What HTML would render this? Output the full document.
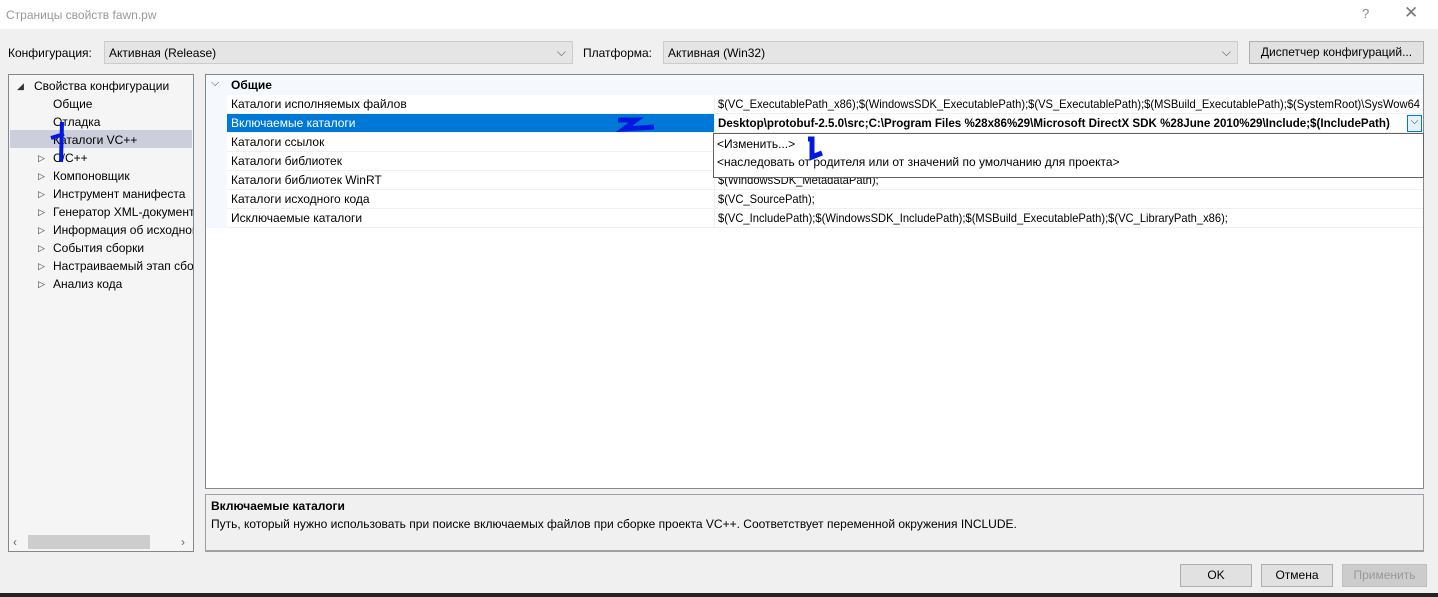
<!DOCTYPE html>
<html><head><meta charset="utf-8"><style>
*{margin:0;padding:0;box-sizing:border-box}
body{width:1438px;height:597px;background:#f0f0f0;font-family:"Liberation Sans",sans-serif;font-size:12px;color:#000;position:relative;overflow:hidden}
.a{position:absolute;white-space:nowrap}
.cn{display:inline-block;transform:scaleX(.93);transform-origin:left center}
.row{position:absolute;left:227px;width:1196px;height:19px;border-bottom:1px solid #f0f0f0;overflow:hidden}
.row .n{position:absolute;left:4px;top:2px}
.row .v{position:absolute;left:487px;border-left:1px solid #f0f0f0;padding-left:3px;height:19px;top:0;line-height:18px}
.tree div{position:absolute;white-space:nowrap}
.tri{font-size:9px;color:#333}
.btn{position:absolute;top:564px;height:23px;border:1px solid #adadad;background:#e1e1e1;text-align:center;line-height:21px}
</style></head><body>
<div class="a" style="left:0;top:0;width:1438px;height:29px;background:#fff"></div>
<div class="a" style="left:6px;top:8px;color:#999;font-size:12px">Страницы свойств fawn.pw</div>
<div class="a" style="left:1362px;top:6px;color:#888;font-size:13px">?</div>
<div class="a" style="left:1404px;top:3px;color:#777;font-size:17px">✕</div>

<div class="a" style="left:8px;top:46px">Конфигурация:</div>
<div class="a" style="left:104px;top:41px;width:469px;height:23px;background:#e5e5e5;border:1px solid #ccc;padding:4px 4px"><span>Активная (Release)</span><span style="position:absolute;right:6px;top:3px;color:#555">⌵</span></div>
<div class="a" style="left:583px;top:46px">Платформа:</div>
<div class="a" style="left:663px;top:41px;width:575px;height:23px;background:#e5e5e5;border:1px solid #ccc;padding:4px 4px"><span>Активная (Win32)</span><span style="position:absolute;right:6px;top:3px;color:#555">⌵</span></div>
<div class="a" style="left:1249px;top:41px;width:175px;height:23px;background:#e1e1e1;border:1px solid #adadad;text-align:center;line-height:21px">Диспетчер конфигураций...</div>

<!-- tree -->
<div class="a tree" style="left:8px;top:74px;width:186px;height:478px;background:#f5f5f5;border:1px solid #828790">
<div style="left:1px;top:55px;width:182px;height:18px;background:#cccedb"></div>
<div class="tri" style="left:8px;top:6px">◢</div><div style="left:25px;top:4px">Свойства конфигурации</div>
<div style="left:44px;top:22px">Общие</div>
<div style="left:44px;top:40px">Отладка</div>
<div style="left:44px;top:58px">Каталоги VC++</div>
<div class="tri" style="left:29px;top:78px">▷</div><div style="left:44px;top:76px">C/C++</div>
<div class="tri" style="left:29px;top:96px">▷</div><div style="left:44px;top:94px">Компоновщик</div>
<div class="tri" style="left:29px;top:114px">▷</div><div style="left:44px;top:112px">Инструмент манифеста</div>
<div class="tri" style="left:29px;top:132px">▷</div><div style="left:44px;top:130px;width:140px;overflow:hidden">Генератор XML-документов</div>
<div class="tri" style="left:29px;top:150px">▷</div><div style="left:44px;top:148px;width:140px;overflow:hidden">Информация об исходном</div>
<div class="tri" style="left:29px;top:168px">▷</div><div style="left:44px;top:166px">События сборки</div>
<div class="tri" style="left:29px;top:186px">▷</div><div style="left:44px;top:184px;width:140px;overflow:hidden">Настраиваемый этап сборки</div>
<div class="tri" style="left:29px;top:204px">▷</div><div style="left:44px;top:202px">Анализ кода</div>
<div style="left:19px;top:460px;width:122px;height:14px;background:#cdcdcd"></div>
<div style="left:4px;top:460px;color:#666">‹</div><div style="left:172px;top:460px;color:#666">›</div>
</div>
<svg class="a" style="left:48px;top:118px" width="22" height="46"><path d="M14 4 L13 44 M3 20 L16 16" stroke="#0018e0" stroke-width="4" fill="none"/></svg>

<!-- grid -->
<div class="a" style="left:205px;top:74px;width:1219px;height:415px;background:#fff;border:1px solid #828790"></div>
<div class="a" style="left:206px;top:75px;width:1217px;height:20px;background:#f5f8fc"></div>
<div class="a" style="left:206px;top:95px;width:21px;height:133px;background:#f5f8fc"></div>
<div class="a" style="left:211px;top:77px;font-size:11px;color:#444">⌵</div>
<div class="a" style="left:231px;top:78px;font-weight:bold">Общие</div>
<div class="row" style="top:95px"><span class="n">Каталоги исполняемых файлов</span><span class="v"><span class="cn">$(VC_ExecutablePath_x86);$(WindowsSDK_ExecutablePath);$(VS_ExecutablePath);$(MSBuild_ExecutablePath);$(SystemRoot)\SysWow64</span></span></div>
<div class="row" style="top:114px;background:#0078d7;color:#fff"><span class="n">Включаемые каталоги</span><span class="v" style="background:#fff;color:#000;width:709px;font-weight:bold"><span class="cn" style="transform:scaleX(.965)">Desktop\protobuf-2.5.0\src;C:\Program Files %28x86%29\Microsoft DirectX SDK %28June 2010%29\Include;$(IncludePath)</span></span><span style="position:absolute;right:1px;top:1px;width:15px;height:17px;border:1px solid #0078d7;background:#e5f1fb;color:#333;font-size:10px;text-align:center">⌵</span></div>
<div class="row" style="top:133px"><span class="n">Каталоги ссылок</span></div>
<div class="row" style="top:152px"><span class="n">Каталоги библиотек</span></div>
<div class="row" style="top:171px"><span class="n">Каталоги библиотек WinRT</span><span class="v"><span class="cn">$(WindowsSDK_MetadataPath);</span></span></div>
<div class="row" style="top:190px"><span class="n">Каталоги исходного кода</span><span class="v"><span class="cn">$(VC_SourcePath);</span></span></div>
<div class="row" style="top:209px"><span class="n">Исключаемые каталоги</span><span class="v"><span class="cn">$(VC_IncludePath);$(WindowsSDK_IncludePath);$(MSBuild_ExecutablePath);$(VC_LibraryPath_x86);</span></span></div>
<!-- dropdown -->
<div class="a" style="left:713px;top:133px;width:711px;height:45px;background:#fff;border:1px solid #646464">
<div class="a" style="left:3px;top:3px">&lt;Изменить...&gt;</div>
<div class="a" style="left:3px;top:21px">&lt;наследовать от родителя или от значений по умолчанию для проекта&gt;</div>
</div>
<svg class="a" style="left:614px;top:112px" width="46" height="22"><path d="M4 8 L22 8 L10 17 L40 15" stroke="#0018e0" stroke-width="5" fill="none"/></svg>
<svg class="a" style="left:800px;top:135px" width="30" height="28"><path d="M8 4 L12 4 L12 22 L22 18" stroke="#0018e0" stroke-width="5" fill="none"/></svg>

<!-- description -->
<div class="a" style="left:205px;top:494px;width:1219px;height:58px;border:1px solid #a0a0a0;border-bottom:2px solid #a0a0a0;background:#f0f0f0"></div>
<div class="a" style="left:211px;top:499px;font-weight:bold">Включаемые каталоги</div>
<div class="a" style="left:211px;top:517px">Путь, который нужно использовать при поиске включаемых файлов при сборке проекта VC++.  Соответствует переменной окружения INCLUDE.</div>

<div class="btn" style="left:1180px;width:72px">OK</div>
<div class="btn" style="left:1261px;width:72px">Отмена</div>
<div class="btn" style="left:1342px;width:85px;color:#999;border-color:#bfbfbf;background:#ccc">Применить</div>
<div class="a" style="left:0;top:593px;width:1438px;height:4px;background:#222"></div>
</body></html>
